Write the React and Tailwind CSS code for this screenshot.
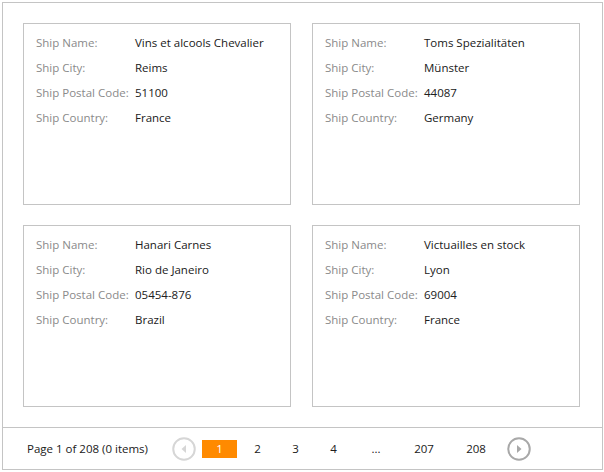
import React from "react";

const orders = [
  { name: "Vins et alcools Chevalier", city: "Reims", code: "51100", country: "France" },
  { name: "Toms Spezialitäten", city: "Münster", code: "44087", country: "Germany" },
  { name: "Hanari Carnes", city: "Rio de Janeiro", code: "05454-876", country: "Brazil" },
  { name: "Victuailles en stock", city: "Lyon", code: "69004", country: "France" },
];

function Row({ label, value }) {
  return (
    <div className="flex h-[25px] items-center">
      <div className="w-[99px] shrink-0 text-[#8a8a8a]">{label}</div>
      <div className="text-[#202020]">{value}</div>
    </div>
  );
}

function Card({ item }) {
  return (
    <div className="h-[182px] border border-[#c4c4c4] pl-[12px] pt-[6px]">
      <Row label="Ship Name:" value={item.name} />
      <Row label="Ship City:" value={item.city} />
      <Row label="Ship Postal Code:" value={item.code} />
      <Row label="Ship Country:" value={item.country} />
    </div>
  );
}

function Arrow({ dir, disabled }) {
  const color = disabled ? "#d6d6d6" : "#a8a8a8";
  return (
    <svg width="24" height="24" viewBox="0 0 24 24">
      <circle cx="12" cy="12" r="10.75" fill="none" stroke={color} strokeWidth="2" />
      {dir === "left" ? (
        <path d="M14 8 L9.5 12 L14 16 Z" fill={color} />
      ) : (
        <path d="M10 8 L14.5 12 L10 16 Z" fill={color} />
      )}
    </svg>
  );
}

export default function App() {
  const pages = [
    { p: "2", w: "w-[35px]" },
    { p: "3", w: "w-[35px]" },
    { p: "4", w: "w-[35px]" },
    { p: "...", w: "w-[44px]" },
    { p: "207", w: "w-[46px]" },
    { p: "208", w: "w-[52px]" },
  ];
  return (
    <div className="p-[2px] font-['Open_Sans',sans-serif] text-[11.5px]">
      <div className="w-[601px] h-[468px] border border-[#c4c4c4] flex flex-col">
        {/* Cards */}
        <div className="grid grid-cols-[268px_268px] gap-x-[21px] gap-y-[20px] p-[20px]">
          {orders.map((o) => (
            <Card key={o.name} item={o} />
          ))}
        </div>
        {/* Pager */}
        <div className="flex-1 border-t border-[#c4c4c4] flex items-center pl-[24px]">
          <span className="text-[#202020] w-[145px]">Page 1 of 208 (0 items)</span>
          <div className="flex items-center">
            <Arrow dir="left" disabled />
            <div className="ml-[6px] flex items-center gap-[3px]">
              <span className="w-[35px] h-[18px] bg-[#ff8a00] text-white flex items-center justify-center">1</span>
              {pages.map((x) => (
                <span
                  key={x.p}
                  className={"h-[18px] flex items-center justify-center text-[#202020] " + x.w}
                >
                  {x.p}
                </span>
              ))}
            </div>
            <div className="ml-[5px]">
              <Arrow dir="right" />
            </div>
          </div>
        </div>
      </div>
    </div>
  );
}
